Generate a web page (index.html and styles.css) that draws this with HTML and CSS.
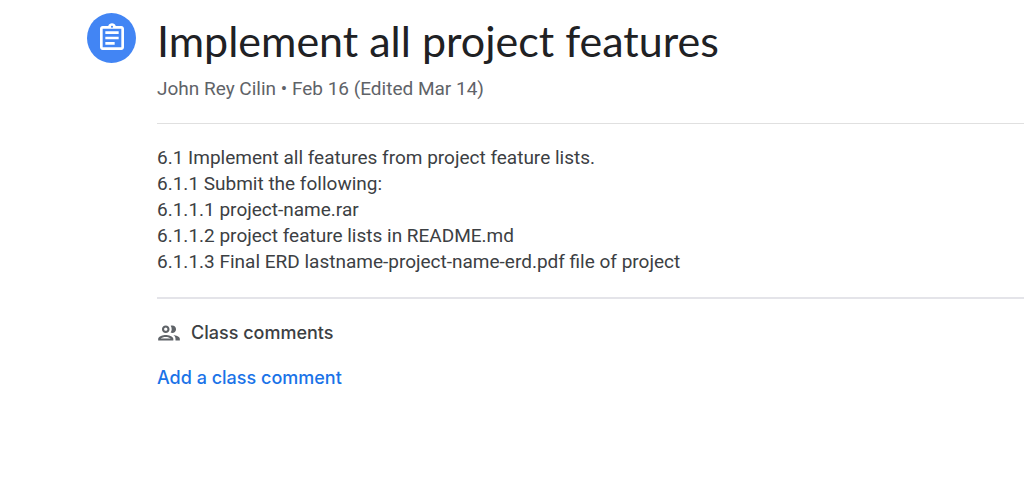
FILE: index.html
```html
<!DOCTYPE html>
<html lang="en">
<head>
<meta charset="utf-8">
<meta name="viewport" content="width=device-width, initial-scale=1">
<title>Implement all project features</title>
<link rel="stylesheet" href="styles.css">
</head>
<body>
<main class="assignment">
  <div class="badge">
    <svg class="badge-icon" viewBox="0 0 24 24" aria-hidden="true"><path d="M7 15h7v2H7zm0-4h10v2H7zm0-4h10v2H7z"/><path d="M19 3h-4.180C14.400 1.840 13.300 1 12 1s-2.400.84-2.820 2H5c-1.100 0-2 .9-2 2v14c0 1.100.9 2 2 2h14c1.100 0 2-.9 2-2V5c0-1.100-.9-2-2-2zm-7-.25c.41 0 .75.34.75.75s-.34.75-.75.75-.75-.34-.75-.75.34-.75.75-.75zM19 19H5V5h14v14z"/></svg>
  </div>
  <div class="content">
    <header class="heading">
      <h1 class="title">Implement all project features</h1>
      <p class="meta">John Rey Cilin • Feb 16 (Edited Mar 14)</p>
    </header>
    <section class="description">
      <p class="line">6.1 Implement all features from project feature lists.</p>
      <p class="line">6.1.1 Submit the following:</p>
      <p class="line">6.1.1.1 project-name.rar</p>
      <p class="line">6.1.1.2 project feature lists in README.md</p>
      <p class="line">6.1.1.3 Final ERD lastname-project-name-erd.pdf file of project</p>
    </section>
    <section class="comments">
      <h2 class="comments-title">
        <svg class="people-icon" viewBox="1 0 22 24" aria-hidden="true"><path d="M9 13.750c-2.340 0-7 1.170-7 3.500V19h14v-1.750c0-2.330-4.660-3.500-7-3.500zM4.340 17c.84-.58 2.870-1.250 4.660-1.250s3.820.67 4.660 1.250H4.340zM9 12c1.930 0 3.500-1.570 3.500-3.500S10.930 5 9 5 5.500 6.570 5.500 8.500 7.070 12 9 12zm0-5c.83 0 1.500.67 1.500 1.500S9.830 10 9 10s-1.500-.67-1.500-1.500S8.170 7 9 7zm7.040 6.810c1.160.84 1.960 1.960 1.960 3.440V19h4v-1.750c0-2.020-3.500-3.170-5.960-3.440zM15 12c1.930 0 3.500-1.570 3.500-3.500S16.930 5 15 5c-.54 0-1.040.13-1.500.35.63.89 1 1.980 1 3.150s-.37 2.260-1 3.150c.46.22.96.35 1.500.35z"/></svg>
        Class comments
      </h2>
      <button class="add-comment" type="button">Add a class comment</button>
    </section>
  </div>
</main>
</body>
</html>
```
FILE: styles.css
```css
* { box-sizing: border-box; }
body {
  margin: 0;
  background: #fff;
  color: #3c4043;
  font-family: Roboto, "Liberation Sans", sans-serif;
  font-size: 19px;
}
h1, h2, p { margin: 0; font-weight: 400; }
.assignment {
  display: flex;
  gap: 21px;
  padding: 13px 0 0 87px;
}
.badge {
  display: flex;
  flex: none;
  align-items: center;
  justify-content: center;
  width: 49px;
  height: 50px;
  border-radius: 50%;
  background: #4285f4;
}
.badge-icon { width: 32px; height: 32px; fill: #fff; }
.content { flex: 1; min-width: 0; }
.heading { padding-bottom: 21px; border-bottom: 1px solid #e0e0e0; }
.title {
  font-family: Lato, Roboto, sans-serif;
  font-size: 43px;
  line-height: 56px;
  color: #202124;
}
.meta { padding-top: 7px; line-height: 26px; color: #5f6368; }
.description {
  padding: 21px 0 22px;
  border-bottom: 2px solid #e4e4e9;
}
.line { line-height: 26px; }
.comments {
  padding-top: 21px;
  font-family: Inter, Roboto, sans-serif;
}
.comments-title {
  display: flex;
  align-items: center;
  gap: 10px;
  font-size: 18px;
  line-height: 26px;
  font-weight: 500;
}
.people-icon { width: 24px; height: 26px; fill: #5f6368; }
.add-comment {
  margin-top: 18px;
  padding: 0;
  border: 0;
  background: none;
  color: #1a73e8;
  font: inherit;
  font-size: 18px;
  font-weight: 500;
  line-height: 28px;
  cursor: pointer;
}
```
